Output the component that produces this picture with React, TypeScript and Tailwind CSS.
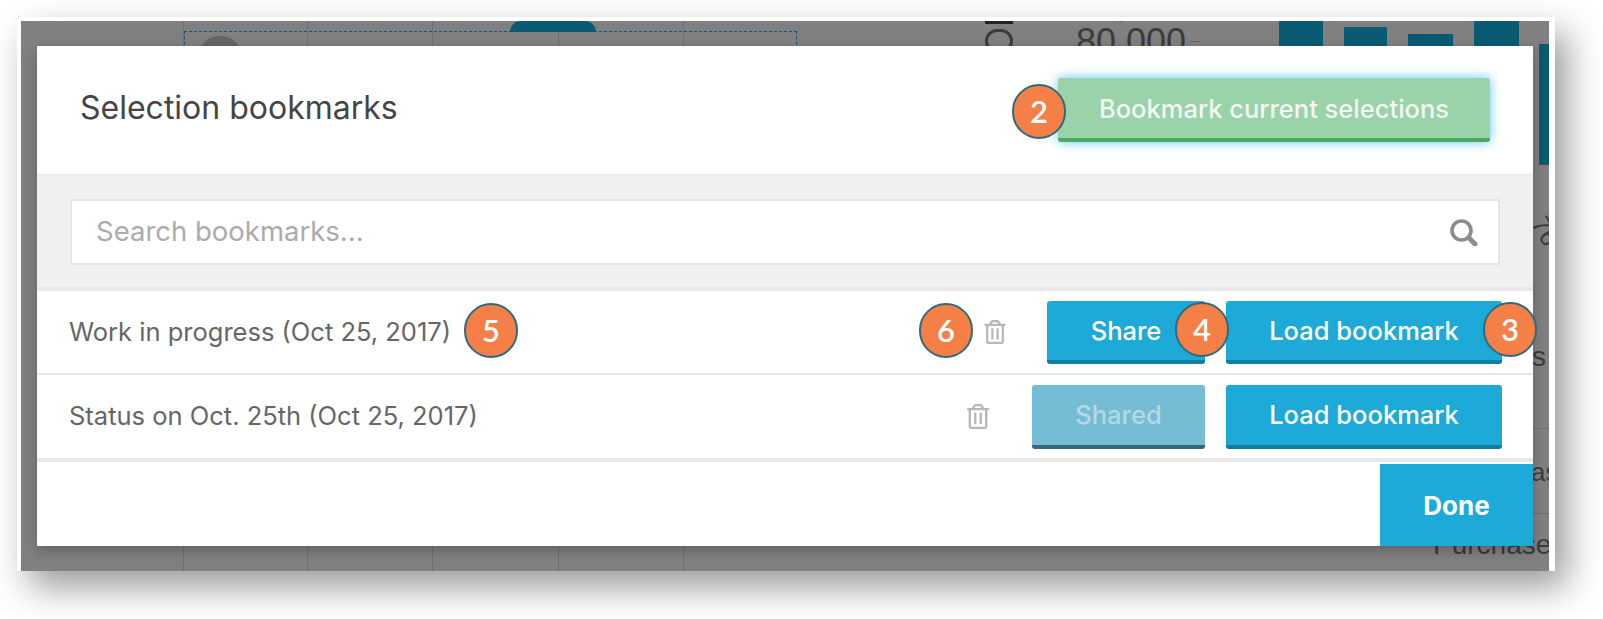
import React from "react";
import { FaRegTrashAlt } from "react-icons/fa";

const sans = "font-['Inter','Noto_Sans',sans-serif]";

function Badge({ n, className = "" }: { n: number; className?: string }) {
  return (
    <span
      className={`z-10 flex h-[55px] w-[54px] shrink-0 items-center justify-center rounded-full border-2 border-[#2f6b7e] bg-[#f47f47] font-['Lato',sans-serif] text-[31px] font-semibold leading-none text-white ${className}`}
    >
      {n}
    </span>
  );
}

function ActionButton({ label, className = "", children }: { label: string; className?: string; children?: React.ReactNode }) {
  return (
    <button className={`relative flex items-center justify-center rounded-[3px] border-b-4 pt-[2px] text-[25.5px] font-medium ${className}`}>
      {label}
      {children}
    </button>
  );
}

function SearchIcon() {
  return (
    <svg viewBox="0 0 29 28" className="h-[28px] w-[29px]" fill="none" stroke="#8c8c8c">
      <circle cx="12.5" cy="12.5" r="9.5" strokeWidth="3.6" />
      <line x1="20" y1="20" x2="26" y2="26" strokeWidth="5" strokeLinecap="round" />
    </svg>
  );
}

// dimmed dashboard behind the dialog
function Backdrop() {
  return (
    <div className="absolute inset-0 font-['Liberation_Sans',sans-serif] text-[#3c3c3c]">
      <div className="absolute inset-y-0 left-[162px] flex">
        <div className="w-[124px] border-l border-[#6f6f6f]" />
        <div className="w-[125px] border-l border-[#6f6f6f]" />
        <div className="w-[126px] border-l border-[#6f6f6f]" />
        <div className="w-[125px] border-l border-[#6f6f6f]" />
        <div className="w-[125px] border-l border-[#6f6f6f]" />
      </div>
      <div className="absolute left-[163px] top-[10px] h-[30px] w-[613px] border-x border-t border-dashed border-[#0b5a73]" />
      <div className="absolute left-[489px] top-0 h-[11px] w-[86px] rounded-t-[12px] bg-[#0b5a73]" />
      <div className="absolute left-[178px] top-[15px] h-[40px] w-[42px] rounded-full bg-[#666666]" />
      <div className="absolute left-[964px] top-0 flex w-[28px] flex-col gap-[5px]">
        <div className="h-[3px] bg-[#222222]" />
        <div className="h-[24px] rounded-full border-[3px] border-[#3c3c3c]" />
      </div>
      <span className="absolute left-[1035px] top-[-36px] text-[36px] leading-[40px]">100,000</span>
      <span className="absolute left-[1055px] top-[1px] text-[36px] leading-[40px]">80,000</span>
      <div className="absolute left-[1169px] top-[20px] h-px w-[10px] bg-[#666666]" />
      <div className="absolute left-[1258px] top-0 flex items-start gap-[21px]">
        <div className="h-[40px] w-[44px] bg-[#0b5a73]" />
        <div className="mt-[6px] h-[40px] w-[43px] bg-[#0b5a73]" />
        <div className="mt-[13px] h-[40px] w-[45px] bg-[#0b5a73]" />
        <div className="h-[40px] w-[45px] bg-[#0b5a73]" />
      </div>
      <div className="absolute right-0 top-[23px] h-[121px] w-[10px] border-b border-[#4a4a4a] bg-[#0b5a73]" />
      <span className="absolute left-[1510px] top-[195px] rotate-[60deg] text-[26px] leading-[30px]">76</span>
      <span className="absolute left-[1511px] top-[321px] text-[28px] leading-[30px]">s</span>
      <span className="absolute left-[1510px] top-[436px] text-[26px] leading-[30px]">as</span>
      <div className="absolute right-0 top-[407px] h-px w-[16px] bg-[#707070]" />
      <div className="absolute right-0 top-[492px] h-px w-[16px] bg-[#707070]" />
      <span className="absolute left-[1412px] top-[509px] text-[28px] leading-[30px]">Purchase</span>
      <div className="absolute left-[270px] top-[522px] h-px w-[16px] bg-[#666666]" />
    </div>
  );
}

export default function App() {
  return (
    <div className={`h-[619px] w-[1603px] overflow-hidden bg-white pl-[17px] pt-[17px] ${sans}`}>
      <div className="h-[554px] w-[1538px] border-l-4 border-r-[6px] border-t-4 border-white shadow-[12px_16px_34px_rgba(0,0,0,0.4)]">
        <div className="relative h-full w-full overflow-hidden bg-[#808080] pl-[16px] pt-[25px]">
          <Backdrop />

          <div className="relative flex h-[500px] w-[1496px] flex-col bg-white shadow-[0_4px_12px_rgba(0,0,0,0.25)]">
            <header className="flex h-[128px] shrink-0 items-center justify-between px-[43px]">
              <h1 className="mt-[-5px] text-[32px] font-normal leading-none text-[#454545]">Selection bookmarks</h1>
              <button className="relative flex h-[64px] w-[432px] items-center justify-center rounded-[3px] border-b-4 border-[#4ea862] bg-[#9ad2a9] pt-[2px] text-[25.5px] font-medium text-[#f2f8f3] shadow-[0_0_12px_rgba(90,200,250,1)]">
                <Badge n={2} className="absolute left-[-46px] top-[6px]" />
                Bookmark current selections
              </button>
            </header>

            <div className="h-[117px] shrink-0 border-b-4 border-t border-[#e8e8e8] bg-[#f0f0f0] px-[33px] pt-[24px]">
              <div className="flex h-[66px] items-center justify-between border-2 border-[#e6e6e6] bg-white pl-[24px] pr-[20px]">
                <span className="text-[27.5px] text-[#ababab]">Search bookmarks...</span>
                <SearchIcon />
              </div>
            </div>

            <div className="flex h-[84px] shrink-0 items-center justify-between border-b-2 border-[#e8e8e8] pl-[32px] pr-[31px]">
              <div className="flex items-center gap-[13px]">
                <span className="text-[25.5px] text-[#666666]">Work in progress (Oct 25, 2017)</span>
                <Badge n={5} className="mt-[-3px]" />
              </div>
              <div className="flex items-center">
                <Badge n={6} className="mr-[11px] mt-[-3px]" />
                <FaRegTrashAlt className="mr-[41px] h-[24px] w-[22px] text-[#b8b8b8]" />
                <ActionButton label="Share" className="mr-[21px] h-[63px] w-[158px] border-[#0f7ea3] bg-[#1daad8] text-white">
                  <Badge n={4} className="absolute left-[128px] top-[1px]" />
                </ActionButton>
                <ActionButton label="Load bookmark" className="h-[63px] w-[276px] border-[#0f7ea3] bg-[#1daad8] text-white">
                  <Badge n={3} className="absolute left-[257px] top-[1px]" />
                </ActionButton>
              </div>
            </div>

            <div className="flex h-[87px] shrink-0 items-center justify-between border-b-4 border-[#e6e6e6] pl-[32px] pr-[31px]">
              <span className="text-[25.5px] text-[#666666]">Status on Oct. 25th (Oct 25, 2017)</span>
              <div className="flex items-center">
                <FaRegTrashAlt className="mr-[43px] h-[25px] w-[22px] text-[#b8b8b8]" />
                <ActionButton label="Shared" className="mr-[21px] h-[64px] w-[173px] border-[#35677d] bg-[#75bdd5] text-[#b4d9e5]" />
                <ActionButton label="Load bookmark" className="h-[64px] w-[276px] border-[#0f7ea3] bg-[#1daad8] text-white" />
              </div>
            </div>

            <footer className="flex flex-1 items-end justify-end">
              <button className="h-[82px] w-[153px] bg-[#1daad8] text-[26px] font-bold text-white">Done</button>
            </footer>
          </div>
        </div>
      </div>
    </div>
  );
}
